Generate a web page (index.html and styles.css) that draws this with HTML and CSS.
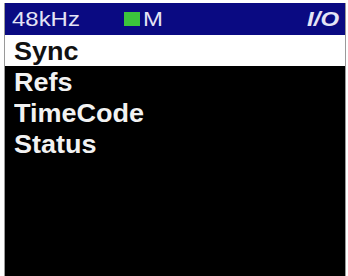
FILE: index.html
```html
<!DOCTYPE html>
<html lang="en">
  <head>
    <meta charset="utf-8" />
    <title>I/O Menu</title>
    <link rel="stylesheet" href="styles.css">
  </head>
  <body>
    <div class="screen">
      <div class="status-bar">
        <span class="rate"><span class="wide">48kHz</span></span>
        <span class="lock-led"></span>
        <span class="wide">M</span>
        <span class="page wide">I/O</span>
      </div>

      <ul class="menu">
        <li class="menu-item selected"><span class="wide">Sync</span></li>
        <li class="menu-item"><span class="wide">Refs</span></li>
        <li class="menu-item"><span class="wide">TimeCode</span></li>
        <li class="menu-item"><span class="wide">Status</span></li>
      </ul>
    </div>
  </body>
</html>
```

FILE: styles.css
```css
body {
  margin: 0;
  background-color: #fff;
  font-family: "Liberation Sans", Arial, sans-serif;
}

.screen {
  margin: 3px 2px 0 4px;
  height: 273px;
  background-color: #000;
  border-left: 1px solid #9a9a9a;
  border-right: 1px solid #9a9a9a;
  box-sizing: border-box;
}

/* text on the panel is a bit wider than arial */
.wide {
  display: inline-block;
  transform: scaleX(1.14);
  transform-origin: left center;
}

.status-bar {
  display: flex;
  align-items: center;
  height: 32px;
  padding: 0 4px 0 7px;
  background-color: #0a0a82;
  color: #e4e4f6;
  font-size: 21px;
}

.rate {
  width: 112px;
}

.lock-led {
  width: 16px;
  height: 14px;
  margin-right: 3px;
  background-color: #3cc43c;
}

.page {
  margin-left: auto;
  margin-right: 2px;
  font-weight: bold;
  font-style: italic;
  transform-origin: right center;
}

.menu {
  list-style: none;
  margin: 0;
  padding: 0;
}

.menu-item {
  padding: 1px 0 0 9px;
  line-height: 30px;
  color: #f2f2f2;
  font-size: 25px;
  font-weight: bold;
}

.menu-item .wide {
  transform: scaleX(1.08);
}

.menu-item.selected {
  background-color: #fff;
  color: #111;
}
```
